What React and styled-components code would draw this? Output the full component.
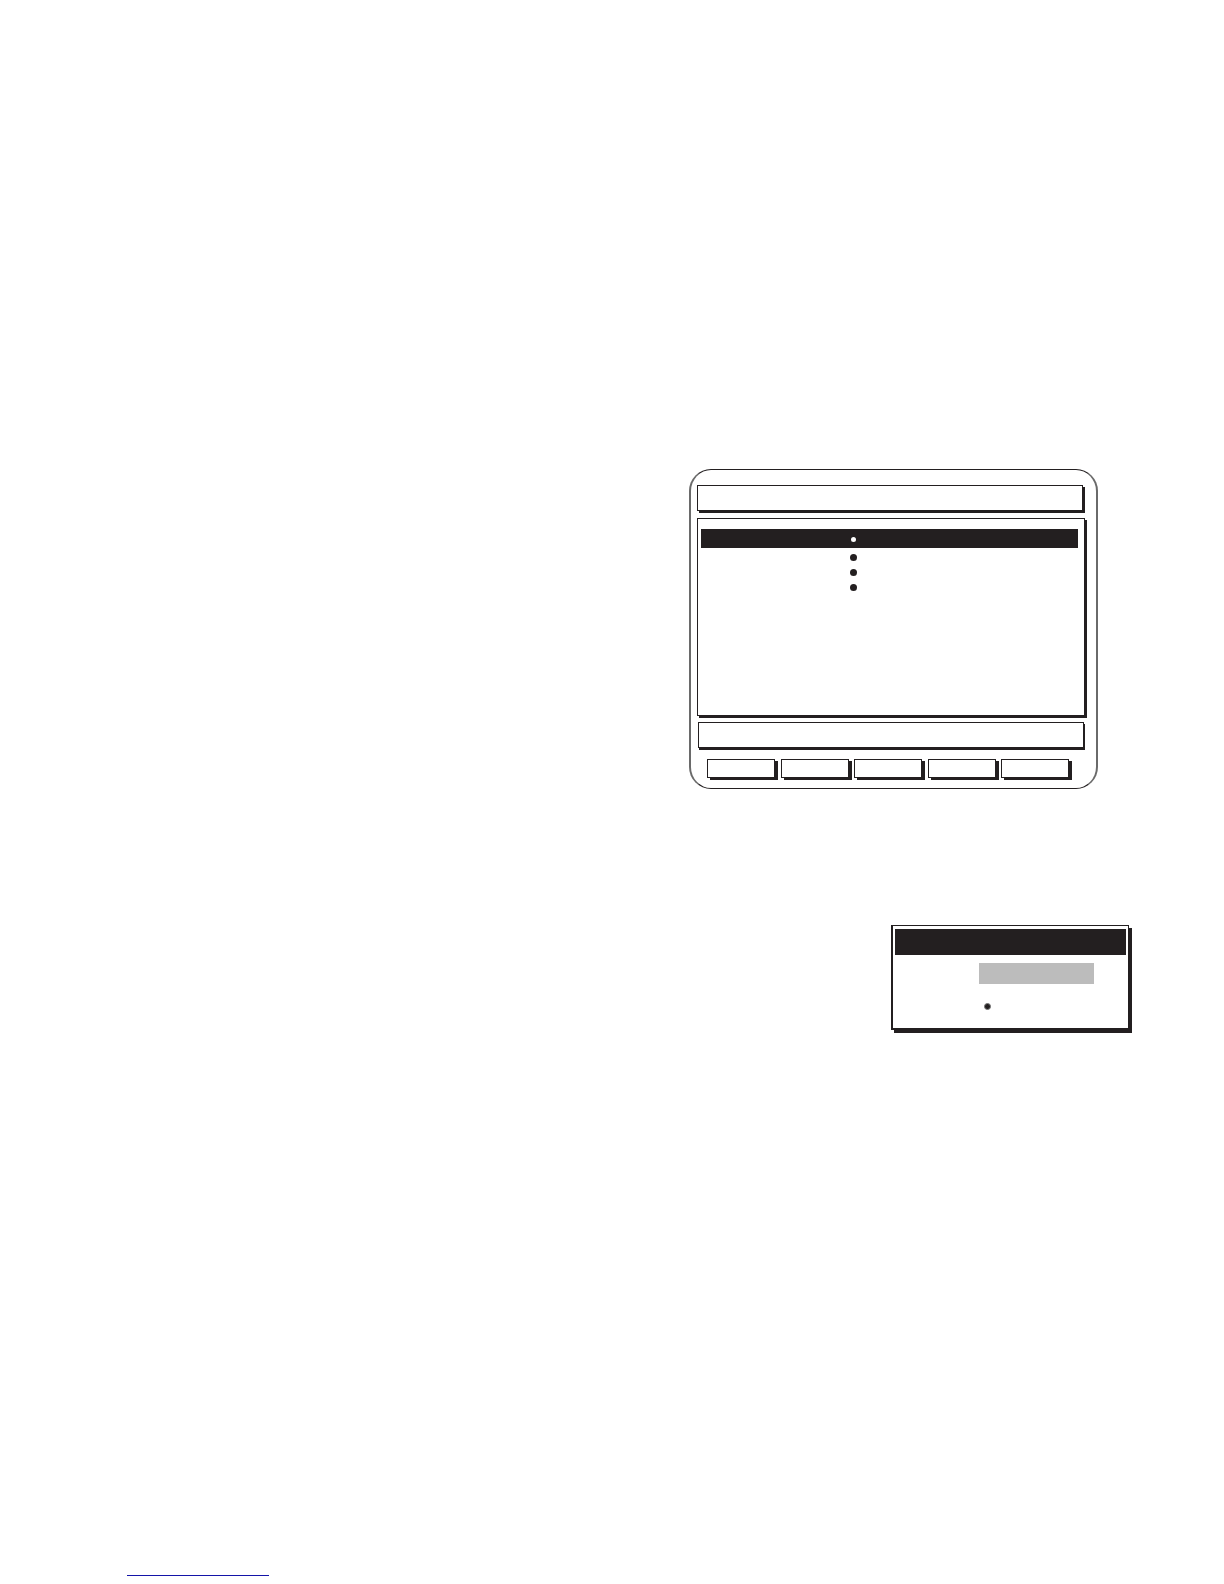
import React from "react";
import styled, { createGlobalStyle } from "styled-components";

const ink = "#231f20";

const GlobalStyle = createGlobalStyle`
  *, *::before, *::after { box-sizing: border-box; }
  body {
    margin: 0;
    background: #fff;
    color: ${ink};
    font: 14px "Liberation Sans", Arial, sans-serif;
  }
`;

const Page = styled.main`
  display: flex;
  flex-direction: column;
  align-items: flex-end;
  padding: 469px 95px 8px 127px;
`;

const Screen = styled.section`
  display: flex;
  flex-direction: column;
  width: 100%;
  max-width: 409px;
  margin-right: 31px;
  padding: 15px 11px 10px 6px;
  border-style: solid;
  border-width: 1px 2px;
  border-color: ${ink} #6a6a6a;
  border-radius: 22px;
`;

const Bar = styled.div`
  height: 26px;
  border: 1px solid ${ink};
  background: #fff;
`;

const TitleBar = styled(Bar)`
  margin: 0 2px 7px 0;
  box-shadow: 2px 2px 0 ${ink};
`;

const MessageBar = styled(Bar)`
  margin: 6px 1px 11px;
  box-shadow: 1px 2px 0 ${ink};
`;

const Panel = styled.div`
  min-height: 198px;
  padding: 10px 6px 0 3px;
  border: 1px solid ${ink};
  box-shadow: 2px 2px 0 ${ink};
`;

const Options = styled.ul`
  margin: 0;
  padding: 0;
  list-style: none;
`;

const Option = styled.li`
  display: grid;
  grid-template-columns: 149px 7px 1fr;
  align-items: center;
  justify-items: center;
  height: ${(p) => (p.$selected ? 19 : 15)}px;
  margin-bottom: ${(p) => (p.$selected ? 2 : 0)}px;
  padding-top: ${(p) => (p.$selected ? 2 : 0)}px;
  background: ${(p) => (p.$selected ? ink : "transparent")};
`;

const Dot = styled.span`
  grid-column: 2;
  width: ${(p) => p.$size}px;
  height: ${(p) => p.$size}px;
  border-radius: 50%;
  background: ${(p) => p.$color || ink};
`;

const Keys = styled.div`
  display: flex;
  justify-content: space-between;
  margin: 0 16px 0 10px;
`;

const Key = styled.button`
  width: 68px;
  height: 19px;
  padding: 0;
  border: 1px solid ${ink};
  border-radius: 0;
  background: #fff;
  box-shadow: 3px 2px 0 ${ink};
`;

const Dialog = styled.section`
  width: 100%;
  max-width: 238px;
  height: 105px;
  margin-top: 136px;
  padding: 3px 2px 0;
  border: solid ${ink};
  border-width: 1px 1px 2px 2px;
  box-shadow: 3px 3px 0 ${ink};
`;

const DialogHeader = styled.header`
  height: 26px;
  background: ${ink};
`;

const Fields = styled.div`
  display: flex;
  flex-direction: column;
  align-items: flex-start;
  gap: 19px;
  padding: 8px 32px 0 84px;
`;

const Field = styled.input`
  width: 100%;
  height: 21px;
  padding: 0 4px;
  border: 0;
  border-radius: 0;
  background: #bcbcbc;
  font: inherit;
`;

const Marker = styled(Dot)`
  margin-left: 5px;
  border: 1px solid #777;
`;

const FooterLink = styled.a`
  align-self: flex-start;
  width: 142px;
  height: 16px;
  margin-top: 530px;
  border-bottom: 1px solid #1414a8;
`;

const options = [true, false, false, false];
const keys = ["F1", "F2", "F3", "F4", "F5"];

export default function App() {
  return (
    <>
      <GlobalStyle />
      <Page>
        <Screen>
          <TitleBar />
          <Panel>
            <Options>
              {options.map((selected, i) => (
                <Option key={i} $selected={selected}>
                  <Dot $size={selected ? 5 : 7} $color={selected ? "#fff" : ink} />
                </Option>
              ))}
            </Options>
          </Panel>
          <MessageBar />
          <Keys>
            {keys.map((name) => (
              <Key key={name} type="button" aria-label={name} />
            ))}
          </Keys>
        </Screen>
        <Dialog>
          <DialogHeader />
          <Fields>
            <Field type="text" aria-label="Value" />
            <Marker $size={7} />
          </Fields>
        </Dialog>
        <FooterLink href="#" aria-label="Website" />
      </Page>
    </>
  );
}
